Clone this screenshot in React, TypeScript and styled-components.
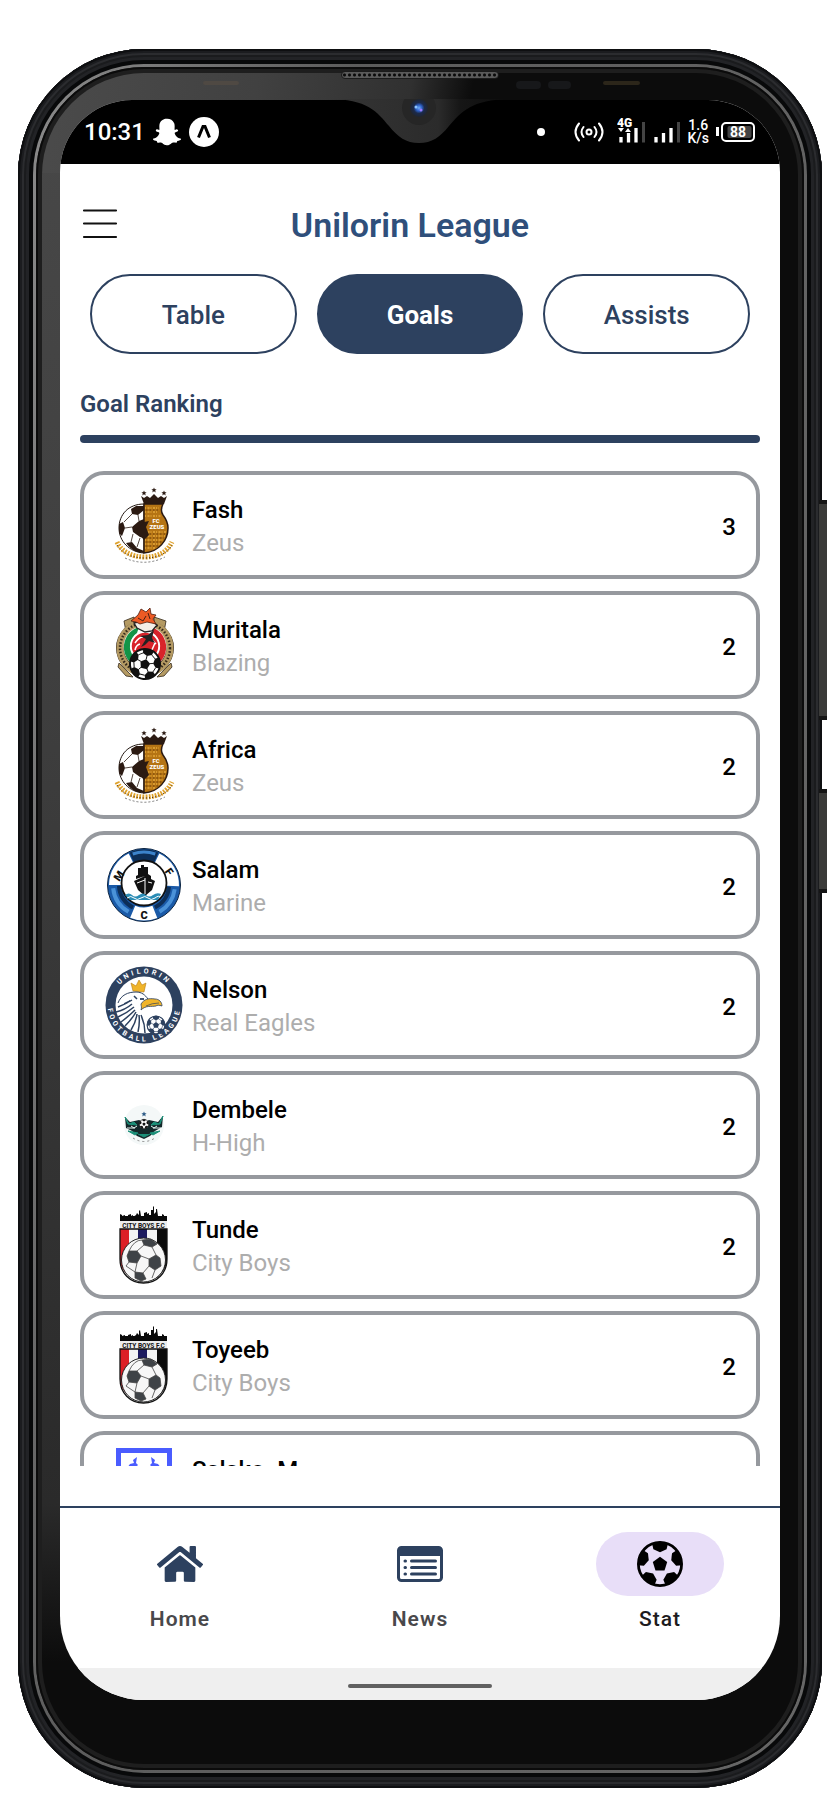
import React from "react";
import styled, { createGlobalStyle } from "styled-components";
import { FaHome, FaSnapchatGhost } from "react-icons/fa";

const navy = "#2d415f";

const GlobalStyle = createGlobalStyle`
  *, *::before, *::after { box-sizing: border-box; }
  body {
    margin: 0;
    background: #ffffff;
    font-family: Roboto, "Liberation Sans", sans-serif;
  }
`;

/* ---------- Device ---------- */

const Stage = styled.div`
  display: flex;
  height: 100vh;
  min-height: 900px;
  padding: 49px 18px 12px;
`;

const Shell = styled.div`
  position: relative;
  display: flex;
  flex: 1;
  min-width: 0;
  padding: 15px;
  border-radius: 126px;
  background: #08090a;
  box-shadow: inset 0 0 0 2px #0e0f11, inset 0 0 0 4px #1b1c1f,
    inset 0 0 0 6px #2b2c2f, inset 0 0 0 8px #1a1b1d, inset 0 0 0 11px #222326;
`;

const Rim = styled.div`
  display: flex;
  flex: 1;
  min-width: 0;
  padding: 3px;
  border-radius: 111px;
  background: linear-gradient(100deg, #8a8a8a, #5c5c5c 30%, #666666);
`;

const Groove = styled.div`
  display: flex;
  flex: 1;
  min-width: 0;
  padding: 6px;
  border-radius: 108px;
  background: #1e1e1e;
  box-shadow: inset 0 0 0 2px #0b0b0b;
`;

const Bezel = styled.div`
  position: relative;
  display: flex;
  flex: 1;
  min-width: 0;
  padding: 27px 18px 64px;
  border-radius: 102px;
  background:
    linear-gradient(100deg, #4b4b4b, #414141 28%, #303030 48%, #0c0c0c 56%) top / 100% 100px no-repeat,
    linear-gradient(#484848, #404040 35%, #2a2a2a 90%, #0c0c0c) left top / 60px 94% no-repeat,
    #0c0c0c;
`;

const SideKey = styled.span<{ $top: number; $height: number }>`
  position: absolute;
  right: -5px;
  top: ${(p) => p.$top}px;
  width: 8px;
  height: ${(p) => p.$height}px;
  border-block: 4px solid #151515;
  background: #3b3b39;
`;

const Speaker = styled.span`
  position: absolute;
  top: -2px;
  left: 50%;
  width: 158px;
  height: 8px;
  margin-left: -79px;
  border: 1px solid #1b1b1b;
  border-radius: 4px;
  background: radial-gradient(circle, #0a0a0a 0 1px, #5a5a5a 2px) 0 0 / 5px 6px;
`;

const Sensor = styled.span<{ $offset: number; $width: number; $color: string }>`
  position: absolute;
  top: 8px;
  left: calc(50% + ${(p) => p.$offset}px);
  width: ${(p) => p.$width}px;
  height: ${(p) => (p.$width > 30 ? 4 : 8)}px;
  border-radius: 4px;
  background: ${(p) => p.$color};
`;

const Notch = styled.svg`
  position: absolute;
  top: 26px;
  left: 50%;
  width: 184px;
  height: 46px;
  margin-left: -92px;
`;

const Screen = styled.div`
  display: flex;
  flex: 1;
  flex-direction: column;
  min-width: 0;
  overflow: hidden;
  border-radius: 72px 72px 84px 84px;
  background: #ffffff;
`;

/* ---------- Status bar ---------- */

const StatusBar = styled.div`
  display: flex;
  flex: none;
  align-items: center;
  justify-content: space-between;
  height: 64px;
  padding: 0 25px 0 24px;
  background: #000000;
  color: #ffffff;
`;

const StatusGroup = styled.div<{ $gap: number }>`
  display: flex;
  align-items: center;
  gap: ${(p) => p.$gap}px;
`;

const Clock = styled.time`
  font-size: 24px;
  font-weight: 500;
  line-height: 32px;
`;

const Dot = styled.span`
  width: 8px;
  height: 8px;
  margin-right: 23px;
  border-radius: 4px;
  background: #ffffff;
`;

const Hotspot = styled.svg`
  margin-right: 7px;
`;

const Speed = styled.span`
  font-size: 14px;
  font-weight: 500;
  line-height: 13px;
  text-align: center;
`;

/* ---------- App ---------- */

const Header = styled.header`
  display: flex;
  flex: none;
  align-items: flex-start;
  padding: 38px 78px 26px 22px;
`;

const MenuButton = styled.button`
  display: flex;
  padding: 7px 0;
  border: 0;
  background: none;
  color: #111111;
`;

const Title = styled.h1`
  flex: 1;
  margin: 0;
  color: #2f4f7b;
  font-size: 34px;
  font-weight: 600;
  line-height: 46px;
  text-align: center;
`;

const Tabs = styled.div`
  display: flex;
  flex: none;
  gap: 20px;
  padding: 0 30px;
`;

const Tab = styled.button<{ $active?: boolean }>`
  flex: 1;
  height: 80px;
  padding: 2px 0 0;
  border: 2px solid ${navy};
  border-radius: 40px;
  background: ${(p) => (p.$active ? navy : "#ffffff")};
  color: ${(p) => (p.$active ? "#ffffff" : navy)};
  font-family: inherit;
  font-size: 26px;
  font-weight: ${(p) => (p.$active ? 700 : 500)};
`;

const Ranking = styled.main`
  display: flex;
  flex: 1;
  flex-direction: column;
  min-height: 0;
  margin-bottom: 40px;
  padding: 34px 20px 0;
`;

const SectionTitle = styled.h2`
  flex: none;
  margin: 0;
  padding-bottom: 15px;
  color: ${navy};
  font-size: 24px;
  font-weight: 600;
  line-height: 32px;
`;

const Rule = styled.div`
  flex: none;
  height: 8px;
  margin-bottom: 28px;
  border-radius: 4px;
  background: ${navy};
`;

const List = styled.ol`
  display: flex;
  flex: 1;
  flex-direction: column;
  gap: 12px;
  min-height: 0;
  margin: 0;
  padding: 0;
  overflow: hidden;
  list-style: none;
`;

const Card = styled.li`
  display: flex;
  flex: none;
  align-items: center;
  gap: 8px;
  height: 108px;
  padding: 0 20px;
  border: 4px solid #96999e;
  border-radius: 24px;
`;

const CrestArt = styled.svg`
  flex: none;
  width: 80px;
  height: 80px;
`;

const Player = styled.div`
  flex: 1;
  min-width: 0;
  padding-top: 4px;
  font-size: 24px;
  line-height: 33px;
`;

const Name = styled.div`
  color: #000000;
  font-weight: 500;
`;

const Team = styled.div`
  min-height: 33px;
  color: #adadad;
`;

const Goals = styled.span`
  padding-top: 4px;
  font-size: 24px;
  font-weight: 500;
`;

/* ---------- Bottom navigation ---------- */

const Nav = styled.nav`
  display: flex;
  flex: none;
  height: 162px;
  padding: 24px 0;
  border-top: 2px solid ${navy};
`;

const NavItem = styled.a<{ $active?: boolean }>`
  display: flex;
  flex: 1;
  flex-direction: column;
  align-items: center;
  gap: 10px;
  color: ${(p) => (p.$active ? "#1d1b20" : "#49484b")};
  font-size: 21px;
  font-weight: ${(p) => (p.$active ? 500 : 600)};
  letter-spacing: 1px;
  line-height: 26px;
  text-decoration: none;
`;

const NavPill = styled.span<{ $active?: boolean }>`
  display: flex;
  align-items: center;
  justify-content: center;
  width: 128px;
  height: 64px;
  border-radius: 32px;
  background: ${(p) => (p.$active ? "#e8def8" : "transparent")};
  color: ${(p) => (p.$active ? "#000000" : navy)};
`;

const GestureBar = styled.div`
  display: flex;
  flex: none;
  align-items: center;
  justify-content: center;
  height: 32px;
  padding-top: 4px;
  background: #efefef;
`;

const GestureHandle = styled.span`
  width: 144px;
  height: 4px;
  border-radius: 2px;
  background: #606060;
`;

/* ---------- Drawings ---------- */

const turns = [0, 72, 144, 216, 288];

type BallProps = { cx: number; cy: number; r: number; ink?: string; paper?: string; seams?: boolean; tilt?: number };

const Ball = ({ cx, cy, r, ink = "#111", paper = "#fff", seams, tilt = 0 }: BallProps) => (
  <g transform={`translate(${cx} ${cy}) scale(${r / 23}) rotate(${tilt})`}>
    <circle r="21.6" fill={paper} stroke={ink} strokeWidth="2.8" />
    <path d="M0-7.200 7.200-2 4.500 6.500H-4.500L-7.200-2Z" fill={ink} />
    {turns.map((t) => (
      <g key={t} transform={`rotate(${t})`}>
        <path d="M-8-20.500Q0-24 8-20.500L6.600-14.800 0-11.800-6.600-14.800Z" fill={ink} />
        {seams && <path d="M0-7V-12M6.600-14.800 12.200-10.600" stroke={ink} strokeWidth="1.300" />}
      </g>
    ))}
  </g>
);

type ArcProps = { r: number; from: number; to: number; color: string; width: number };

/* Part of a ring, in degrees clockwise from the top. */
const Arc = ({ r, from, to, color, width }: ArcProps) => (
  <circle cx="40" cy="40" r={r} fill="none" stroke={color} strokeWidth={width} pathLength={360}
    strokeDasharray={`${to - from} 360`} transform={`rotate(${from - 90} 40 40)`} />
);

const star = "M0-2.600.8-.8 2.600-.8 1.200.4 1.700 2.400 0 1.200-1.700 2.400-1.200.4-2.600-.8-.8-.8Z";

const ZeusCrest = () => (
  <>
    <g fill="#2b1a12">
      <path d={star} transform="translate(40 8)" />
      <path d={star} transform="translate(50 5)" />
      <path d={star} transform="translate(60 8)" />
      <path d="M37 11l3 2 3-2 3 2 4-4 4 4 3-2 3 2 3-2-3 8H40Z" />
    </g>
    <path d="M40 19C24 19 15 30 15 43S25 67 40 68Z" fill="#fff" stroke="#20140e" strokeWidth="1" />
    <path d="M27 24l5-3h8v4l-6 5-6-1ZM15 39l4-2 2 6-3 8-3-3ZM28 42l7-6 5-2v19l-4-1-7-5ZM22 58l6-1 5 6 7 3v2c-7 0-13-3-18-10Z" fill="#2b1a12" />
    <path d="M28 29l-8 8M21 43l7-1M29 49l-2 8M34 30l1 6M36 53l-3 9" stroke="#2b1a12" strokeWidth="0.800" />
    <path d="M40 19h19c-2 4-2 8 0 11 3 4 5 8 5 13 0 12-9 24-24 25Z" fill="#b57414" stroke="#2b1a12" strokeWidth="1.500" />
    <path d="M41 23h14M41 27h13M41 31h16M41 47h21M41 51h20M41 55h18M41 59h15M41 63h11" stroke="#e3a73a" strokeWidth="1.500" strokeDasharray="1 1.500 2 1" />
    <path d="M42 25h14M42 49h19M42 53h18M42 57h16M42 61h12" stroke="#6b3d0b" strokeWidth="1" strokeDasharray="1.500 2" />
    <path d="M32 46l8-9 5-1-3 6 3 8-5 5Z" fill="#2b1a12" />
    <g fill="#fff" fontFamily="Roboto, sans-serif" fontWeight="900" textAnchor="middle" fontSize="6">
      <text x="52" y="38">FC</text>
      <text x="53" y="44">ZEUS</text>
    </g>
    <path d="M13 57c4 9 14 15 28 15s23-6 27-15" fill="none" stroke="#e0a22c" strokeWidth="5" strokeDasharray="1.800 1.300" />
    <path d="M13 60c5 8 14 13 28 13s22-5 27-13" fill="none" stroke="#3a2410" strokeWidth="1" strokeDasharray="1 2" />
    <path d="M21 73q20 9 40-1" fill="none" stroke="#777" strokeWidth="1" strokeDasharray="2 2" />
  </>
);

const BlazingCrest = () => (
  <>
    <path d="M20 16 30 12 32 22 22 27ZM62 16 50 12 50 22 60 27Z" fill="#b49a63" stroke="#33281a" strokeWidth="0.800" />
    <ellipse cx="41" cy="43" rx="29" ry="28" fill="#33281a" />
    <ellipse cx="41" cy="43" rx="25" ry="25" fill="none" stroke="#b49a63" strokeWidth="7" />
    <ellipse cx="41" cy="43" rx="25" ry="25" fill="none" stroke="#33281a" strokeWidth="2.500" strokeDasharray="1.500 1.800" />
    <circle cx="41" cy="42" r="21.500" fill="#fff" />
    <path d="M35 22a21 21 0 0 0-9 35l4-5a16 16 0 0 1 3-24Z" fill="#139447" />
    <path d="M47 22a21 21 0 0 1 9 35l-4-5a16 16 0 0 0-3-24Z" fill="#d8232a" />
    <circle cx="41" cy="41" r="14" fill="#d8232a" stroke="#fff" strokeWidth="1.500" />
    <path d="M31 38q4-6 8-6M31 45q1-5 5-6M51 38l-4 9M46 33l6 6" stroke="#fff" strokeWidth="1.500" fill="none" />
    <path d="M30 18l8-2h10l5 4-5 6-7 1-8-4Z" fill="#f4efe8" stroke="#222" strokeWidth="1.300" />
    <path d="M37 42l5-8-6-3 8-1 6-5-2 8 3 5-6-2-4 4Z" fill="#222" />
    <path d="M27 16l7-6 3-6 5 3 4-4 1 6 5 1-3 4 3 5-9-2-7 2-4-2Z" fill="#ee5a24" stroke="#4b2013" strokeWidth="0.800" />
    <path d="M34 13l5 3 3-5M44 8l2 6" stroke="#4b2013" strokeWidth="1" fill="none" />
    <path d="M15 58l14 14-7-1-8-9ZM67 58 53 72l7-1 8-9Z" fill="#b49a63" stroke="#33281a" strokeWidth="0.800" />
    <Ball cx={41} cy={59} r={16} seams tilt={14} />
  </>
);

const MarineCrest = () => (
  <>
    <circle cx="40" cy="40" r="36.500" fill="#1a5aa8" stroke="#0b2340" strokeWidth="1" />
    <Arc r={29} from={-24} to={24} color="#0d2e57" width={13} />
    <Arc r={33} from={-20} to={20} color="#3c83cb" width={3} />
    <Arc r={29} from={270} to={334} color="#fff" width={12} />
    <Arc r={29} from={26} to={92} color="#fff" width={12} />
    <Arc r={25} from={94} to={154} color="#0d2e57" width={4} />
    <Arc r={25} from={206} to={268} color="#0d2e57" width={4} />
    <Arc r={31} from={98} to={150} color="#4a92d8" width={4} />
    <Arc r={31} from={210} to={264} color="#4a92d8" width={4} />
    <Arc r={29} from={158} to={203} color="#fff" width={13} />
    <circle cx="40" cy="38" r="22.500" fill="#fff" stroke="#111" strokeWidth="1.800" />
    <path d="M34 30v-7h3v-3h3v2h4v7l3 2v3l-6-3-9 3v-3ZM30 36l11-5 10 5-3 9-7 6-7-6Z" fill="#111" />
    <path d="M41 33v16M33 38l8-3M44 37l4 1" stroke="#fff" strokeWidth="1" />
    <path d="M21 50q4-3 7 0t7 0 7 0 7 0 8-1l-3 6H26Z" fill="#2a8cb5" />
    <path d="M23 53q4-3 7 0t7 0 7 0 7 0 5-1" stroke="#fff" strokeWidth="1" fill="none" />
    <g fill="#111" fontFamily="Roboto, sans-serif" fontWeight="900" fontSize="11" textAnchor="middle">
      <text transform="translate(18 33) rotate(-55)">M</text>
      <text transform="translate(62 29) rotate(55)">F</text>
      <text x="40" y="74">C</text>
    </g>
  </>
);

const EagleCrest = () => (
  <>
    <defs>
      <path id="ring-upper" d="M8.500 40a31.500 31.500 0 0 1 63 0" />
      <path id="ring-lower" d="M3.500 40v-6a36.500 36.500 0 0 0 73 6v-6" />
      <path id="ring-base" d="M4.500 32a36.400 36.400 0 1 0 71 0" />
    </defs>
    <circle cx="40" cy="40" r="38.500" fill={navy} />
    <circle cx="40" cy="40" r="28.500" fill="#fff" />
    <g fill="#fff" fontFamily="Roboto, sans-serif" fontWeight="700" fontSize="7" textAnchor="middle">
      <text letterSpacing="3"><textPath href="#ring-upper" startOffset="50%">UNILORIN</textPath></text>
      <text letterSpacing="3"><textPath href="#ring-base" startOffset="50%">FOOTBALL LEAGUE</textPath></text>
    </g>
    <path d="M27 18l5 3 3-6 3 5 4-2-2 9-11-1Z" fill="#f0b429" stroke="#b57b10" strokeWidth="0.600" />
    <path d="M14 38c3-8 10-11 18-11 6 0 9 3 12 7" fill="none" stroke={navy} strokeWidth="1" />
    <path d="M36 34l4 0" stroke={navy} strokeWidth="1.800" />
    <path d="M37 39c3-5 8-6 14-5 4 0 7 3 7 7-3-1-5-1-6 0-5 1-10-1-15 4 1-3 0-4 0-6Z" fill="#f0b429" stroke={navy} strokeWidth="0.800" />
    <path d="M42 41q6-3 13-3" stroke={navy} strokeWidth="0.700" fill="none" />
    <path d="M14 42q8-3 14-7M12 47q9-2 16-8M14 52q9-4 16-10M17 57q8-6 14-12M21 61q7-7 11-14M27 65q5-8 6-16M34 67q2-9 1-17M41 68q0-9-4-18M20 39l6-3M30 31l3 3" fill="none" stroke={navy} strokeWidth="1.500" />
    <Ball cx={52} cy={60} r={9.500} ink={navy} seams />
  </>
);

const HighCrest = () => (
  <>
    <circle cx="40" cy="40" r="20" fill="#f4f8f8" />
    <path d={star} transform="translate(40 29)" fill="#2b5a86" />
    <path d="M21 32l5 5 9-2 5 2 5-2 9 2 5-6-1 11-7 4-5 5-6 3-7-3-5-5-6-3Z" fill="#14282a" />
    <path d="M21 32l4 7 5-2 3 3-9-1ZM59 31l-4 8-5-2-3 3 9-1ZM24 46l10 2-3 2ZM56 46l-10 2 3 2ZM34 49l6 3 6-3" fill="#1b8f78" stroke="#1b8f78" strokeWidth="1" />
    <path d="M27 41l3 2 3-2M47 41l3 2 3-2M23 43h8M49 43h8" stroke="#e8f4f1" strokeWidth="1" fill="none" />
    <Ball cx={40} cy={39} r={5} />
    <path d="M29 53q11 7 22 0" fill="none" stroke="#888" strokeWidth="1" strokeDasharray="2 3" />
  </>
);

const CityCrest = () => (
  <>
    <path d="M16 16V9l2 1v1l3-1v2h3v-2l3-1v2l2-1v2l3-2 1-2 2 2v-4l1-1 1 6h3V8l3-1v2l2-1v2h2V5h2V1l1 1v7l2-2v-3l1 0 1 7h4v-2l2 1v7Z" fill="#0a0a0a" />
    <path d="M16 11h47v5H16Z" fill="#0a0a0a" />
    <rect x="16" y="16" width="47" height="8" fill="#ececec" />
    <text x="39.500" y="22.500" fontFamily="Roboto, sans-serif" fontWeight="700" fontSize="6.500" textAnchor="middle" fill="#111">CITY BOYS F.C</text>
    <path d="M16 24h47v30c0 14-10 24-23.500 24S16 68 16 54Z" fill="#f3f3f3" />
    <path d="M16 24h9v47q-9-7-9-17Z" fill="#dc1f26" />
    <path d="M34 24h9v20h-9Z" fill="#1c1a5e" />
    <path d="M53 24h10v30q0 10-10 19Z" fill="#0a0a0a" />
    <path d="M16 24h47v30c0 14-10 24-23.500 24S16 68 16 54Z" fill="none" stroke="#111" strokeWidth="1.300" />
    <circle cx="39.500" cy="55" r="22" fill="#f7f7f7" stroke="#222" strokeWidth="1" />
    <g stroke="#444" strokeWidth="0.800" fill="#3f4347">
      <path d="M38 35l9-1 6 5-5 3-8-2ZM25 46l8 0 4 5-4 7-8-1-2-6ZM45 54l7-4 4 3 1 8-6 4-6-4ZM31 67l8 1 3 6-5 2-6-3Z" />
      <path d="M38 35q-8 0-13 11M40 40l-7 6M48 42l4 8M37 51l8 3M33 58l-2 9M45 61l-6 7M51 65l-3 8M25 57l-3 4 9 6" fill="none" />
    </g>
  </>
);

const FrameCrest = () => (
  <>
    <rect x="14.500" y="5.500" width="51" height="69" fill="#fff" stroke="#4a5cff" strokeWidth="5" />
    <path d="M23 23l3-4 4-1-1-3 4-3-1 6 2 2-3 3ZM57 23l-3-4-4-1 1-3-4-3 1 6-2 2 3 3Z" fill="#4a5cff" />
    <path d="M28 36h24v12q0 10-12 16-12-6-12-16Z" fill="#4a5cff" />
  </>
);

const SoccerIcon = () => (
  <svg width="46" height="46" viewBox="-23 -23 46 46" aria-hidden="true">
    <Ball cx={0} cy={0} r={23} ink="#000" paper="transparent" />
  </svg>
);

const NewsIcon = () => (
  <svg width="46" height="36" viewBox="0 0 46 36" fill="none" stroke="currentColor" aria-hidden="true">
    <rect x="1.500" y="1.500" width="43" height="33" rx="3" strokeWidth="3" />
    <path d="M2 2h42v8H2Z" fill="currentColor" stroke="none" />
    <g strokeWidth="3" strokeLinecap="round">
      <path d="M8 15h.5M8 21.500h.5M8 28h.5M14.500 15h24M14.500 21.500h24M14.500 28h24" />
    </g>
  </svg>
);

const ExpoIcon = () => (
  <svg width="30" height="30" viewBox="0 0 30 30" aria-hidden="true">
    <circle cx="15" cy="15" r="15" fill="#fff" />
    <path d="M9.500 20.500 14 9.500h2l4.500 11" fill="none" stroke="#000" strokeWidth="3" />
  </svg>
);

const HotspotIcon = () => (
  <Hotspot width="30" height="20" viewBox="0 0 30 20" fill="none" stroke="#fff" strokeWidth="2" strokeLinecap="round" aria-hidden="true">
    <circle cx="15" cy="10" r="2.500" />
    <path d="M9.500 5q-4 5 0 10M20.500 5q4 5 0 10M5 1.500q-7 8.500 0 17M25 1.500q7 8.500 0 17" />
  </Hotspot>
);

const SignalIcon = ({ label }: { label?: string }) => (
  <svg width="29" height="36" viewBox="0 0 29 36" stroke="#fff" strokeWidth="3.300" aria-hidden="true">
    <path d="M4 28.500v-5.500M11.500 28.500v-9.500M19 28.500V14" />
    {label && (
      <>
        <path d="M1 14h6l-3 4ZM8 18h6l-3-4Z" fill="#fff" stroke="none" />
        <text x="0" y="13" fill="#fff" stroke="none" fontFamily="Roboto, sans-serif" fontWeight="900" fontSize="12">{label}</text>
      </>
    )}
    <path d="M26.500 28.500V8" stroke="#444" strokeWidth="3" />
  </svg>
);

const BatteryIcon = () => (
  <svg width="40" height="20" viewBox="0 0 40 20" aria-hidden="true">
    <path d="M2.500 5v9" stroke="#fff" strokeWidth="3" />
    <rect x="7" y="1" width="32" height="18" rx="4" fill="none" stroke="#fff" strokeWidth="2" />
    <rect x="12.500" y="4" width="24" height="12" rx="2" fill="#444" />
    <text x="23" y="15" fill="#fff" fontFamily="Roboto, sans-serif" fontWeight="700" fontSize="14" textAnchor="middle">88</text>
  </svg>
);

const MenuIcon = () => (
  <svg width="36" height="30" viewBox="0 0 36 30" stroke="currentColor" strokeWidth="2.200" strokeLinecap="round" aria-hidden="true">
    <path d="M2 1.500h32M2 14.500h32M2 28h32" />
  </svg>
);

/* ---------- Data ---------- */

const scorers: { name: string; team?: string; goals?: number; crest: () => React.ReactElement }[] = [
  { name: "Fash", team: "Zeus", goals: 3, crest: ZeusCrest },
  { name: "Muritala", team: "Blazing", goals: 2, crest: BlazingCrest },
  { name: "Africa", team: "Zeus", goals: 2, crest: ZeusCrest },
  { name: "Salam", team: "Marine", goals: 2, crest: MarineCrest },
  { name: "Nelson", team: "Real Eagles", goals: 2, crest: EagleCrest },
  { name: "Dembele", team: "H-High", goals: 2, crest: HighCrest },
  { name: "Tunde", team: "City Boys", goals: 2, crest: CityCrest },
  { name: "Toyeeb", team: "City Boys", goals: 2, crest: CityCrest },
  { name: "Salako. M", crest: FrameCrest },
];

export default function App() {
  return (
    <>
      <GlobalStyle />
      <Stage>
        <Shell>
          <SideKey $top={451} $height={220} />
          <SideKey $top={740} $height={104} />
          <Rim>
            <Groove>
              <Bezel>
                <Screen>
                  <StatusBar>
                    <StatusGroup $gap={8}>
                      <Clock>10:31</Clock>
                      <FaSnapchatGhost size={28} aria-hidden="true" />
                      <ExpoIcon />
                    </StatusGroup>
                    <StatusGroup $gap={6}>
                      <Dot />
                      <HotspotIcon />
                      <SignalIcon label="4G" />
                      <SignalIcon />
                      <Speed>
                        1.6
                        <br />
                        K/s
                      </Speed>
                      <BatteryIcon />
                    </StatusGroup>
                  </StatusBar>

                  <Header>
                    <MenuButton aria-label="Open menu">
                      <MenuIcon />
                    </MenuButton>
                    <Title>Unilorin League</Title>
                  </Header>

                  <Tabs>
                    <Tab>Table</Tab>
                    <Tab $active>Goals</Tab>
                    <Tab>Assists</Tab>
                  </Tabs>

                  <Ranking>
                    <SectionTitle>Goal Ranking</SectionTitle>
                    <Rule />
                    <List>
                      {scorers.map(({ name, team, goals, crest: Crest }) => (
                        <Card key={name}>
                          <CrestArt viewBox="0 0 80 80" aria-hidden="true">
                            <Crest />
                          </CrestArt>
                          <Player>
                            <Name>{name}</Name>
                            <Team>{team}</Team>
                          </Player>
                          <Goals>{goals}</Goals>
                        </Card>
                      ))}
                    </List>
                  </Ranking>

                  <Nav>
                    <NavItem href="#home">
                      <NavPill>
                        <FaHome size={46} aria-hidden="true" />
                      </NavPill>
                      Home
                    </NavItem>
                    <NavItem href="#news">
                      <NavPill>
                        <NewsIcon />
                      </NavPill>
                      News
                    </NavItem>
                    <NavItem href="#stat" $active>
                      <NavPill $active>
                        <SoccerIcon />
                      </NavPill>
                      Stat
                    </NavItem>
                  </Nav>
                  <GestureBar>
                    <GestureHandle />
                  </GestureBar>
                </Screen>

                <Speaker />
                <Sensor $offset={-217} $width={36} $color="#4f4943" />
                <Sensor $offset={96} $width={25} $color="#17181a" />
                <Sensor $offset={128} $width={23} $color="#17181a" />
                <Sensor $offset={183} $width={37} $color="#2c261a" />
                <Notch viewBox="0 0 184 46" aria-hidden="true">
                  <defs>
                    <linearGradient id="notch-sheen">
                      <stop offset="0" stopColor="#353535" />
                      <stop offset="0.600" stopColor="#2b2b2b" />
                      <stop offset="0.720" stopColor="#161616" />
                      <stop offset="1" stopColor="#0c0c0c" />
                    </linearGradient>
                    <radialGradient id="lens">
                      <stop offset="0" stopColor="#6fb0ff" />
                      <stop offset="0.350" stopColor="#2a5cc0" />
                      <stop offset="0.600" stopColor="#1c2a4a" />
                      <stop offset="1" stopColor="#1f2530" />
                    </radialGradient>
                  </defs>
                  <path d="M0 0C40 0 49 13 61 27 70 38 78 44 91 44S112 38 121 27C133 13 144 0 184 0Z" fill="url(#notch-sheen)" />
                  <circle cx="91" cy="9" r="17" fill="#262626" />
                  <circle cx="91" cy="9" r="9" fill="url(#lens)" />
                  <circle cx="88" cy="8" r="1.500" fill="#8cc4ff" />
                  <circle cx="93" cy="11" r="1.500" fill="#9a7bff" />
                </Notch>
              </Bezel>
            </Groove>
          </Rim>
        </Shell>
      </Stage>
    </>
  );
}
